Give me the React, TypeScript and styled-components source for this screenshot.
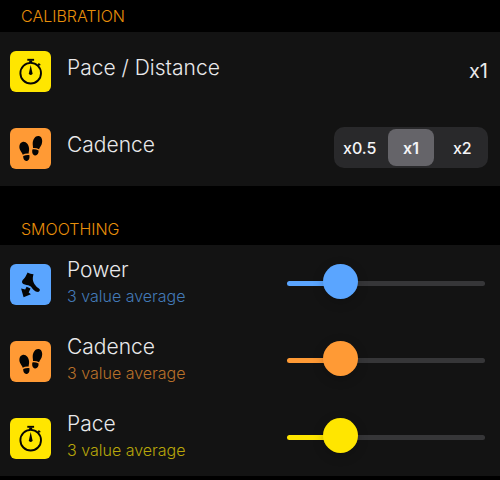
import React, { useState } from "react";
import styled, { createGlobalStyle } from "styled-components";

const GlobalStyle = createGlobalStyle`
  body {
    margin: 0;
    background: #000;
    color: #e9e9eb;
    font-family: Inter, "Liberation Sans", sans-serif;
    font-weight: 300;
  }
  *, *::before, *::after { box-sizing: border-box; }
`;

const Page = styled.main`
  width: 100%;
`;

const SectionTitle = styled.h2<{ $spaced?: boolean }>`
  margin: 0;
  padding: ${(p) => (p.$spaced ? "32px" : "5px")} 21px 5px;
  color: #e88f0a;
  font-size: 16px;
  font-weight: 300;
  line-height: 22px;
`;

const Panel = styled.div`
  background: #131313;
`;

const Row = styled.div`
  display: flex;
  align-items: flex-start;
  gap: 16px;
  height: 77px;
  padding: 0 12px 0 10px;
`;

const IconTile = styled.span<{ $color: string }>`
  display: flex;
  flex: none;
  width: 41px;
  height: 41px;
  margin-top: 19px;
  border-radius: 6px;
  background: ${(p) => p.$color};
  color: #050505;
`;

const Labels = styled.div<{ $single?: boolean }>`
  display: flex;
  flex: 1;
  flex-direction: column;
  padding-top: ${(p) => (p.$single ? "22px" : "11px")};
`;

const Name = styled.span`
  font-size: 21px;
  line-height: 28px;
`;

const Detail = styled.span<{ $color: string }>`
  color: ${(p) => p.$color};
  font-size: 16px;
  line-height: 24px;
`;

const Value = styled.span`
  padding-top: 25px;
  font-size: 20px;
  font-weight: 400;
  line-height: 28px;
`;

const Segments = styled.div`
  display: grid;
  grid-template-columns: repeat(3, 1fr);
  width: 154px;
  height: 41px;
  margin-top: 18px;
  padding: 2px 0;
  border-radius: 10px;
  background: #29292b;
`;

const Segment = styled.button<{ $active: boolean }>`
  margin: 0 3px;
  padding: 0;
  border: 0;
  border-radius: 8px;
  background: ${(p) => (p.$active ? "#656469" : "transparent")};
  color: #f4f4f6;
  font: ${(p) => (p.$active ? 600 : 500)} 16px/24px Inter, "Liberation Sans", sans-serif;
`;

const Slider = styled.input<{ $color: string; $fill: number }>`
  appearance: none;
  flex: none;
  width: 198px;
  height: 36px;
  margin: 20px 3px 0 0;
  background: transparent;

  &::-webkit-slider-runnable-track {
    height: 5px;
    border-radius: 3px;
    background: linear-gradient(
      to right,
      ${(p) => p.$color} ${(p) => p.$fill}%,
      #363638 ${(p) => p.$fill}%
    );
  }

  &::-webkit-slider-thumb {
    appearance: none;
    width: 35px;
    height: 35px;
    margin-top: -17px;
    border-radius: 50%;
    background: ${(p) => p.$color};
    box-shadow: 0 3px 12px rgba(0, 0, 0, 0.2);
  }
`;

const Stopwatch = () => (
  <svg viewBox="0 0 41 41" width="41" height="41" aria-hidden="true">
    <g fill="none" stroke="currentColor">
      <circle cx="20.7" cy="22.2" r="10.3" strokeWidth="1.9" />
      <path d="M17.3 8.8h6.8" strokeWidth="1.9" />
      <path d="M20.7 9.5v2.5" strokeWidth="3" />
      <path d="M27.4 15.1l1.8-1.8M28.4 12.4l1.8 1.8" strokeWidth="1.4" />
    </g>
    <path d="M20.7 14l1.8 8.3a1.8 1.8 0 1 1-3.6 0z" fill="currentColor" />
  </svg>
);

const Footprints = () => (
  <svg viewBox="0 0 41 41" width="41" height="41" aria-hidden="true" fill="currentColor">
    <path d="M12.5 14c3.3-.9 6.4 2.7 6.6 6.7.1 2.1-.5 3.4-.4 4.9-2.2-.4-4.1.1-6 1.1-.4-1.6-1.7-2.6-2.6-4.6-1.5-3.4-.6-7.4 2.4-8.1z" />
    <path d="M13.2 28.1c2.1-1 4-1.4 6.1-1.1.7 3-.4 5.7-2.5 5.9-2.3.3-3.8-1.9-3.6-4.8z" />
    <path d="M29 8.1c-3.4-.8-6.1 2.9-6.3 6.9-.1 2.1.4 3.5.3 5 2.2-.3 4.1.2 6.1 1.3.4-1.7 1.7-2.9 2.5-4.8 1.4-3.5.4-7.7-2.6-8.4z" />
    <path d="M28.6 22.6c-2.1-1.1-4-1.5-6.2-1.2-.7 3 .4 5.7 2.6 6 2.2.3 3.8-1.9 3.6-4.8z" />
  </svg>
);

const FootPower = () => (
  <svg viewBox="0 0 41 41" width="41" height="41" aria-hidden="true" fill="currentColor">
    <path d="M17.6 8.6c1.9 1 3.8 1.6 5.9 1.7-.7 2.5-.9 4.7-.4 6.7.6 2.2 1.8 3.8 3 5.2 1.2 1.3 3.3 2.1 3.7 3.4.3 1.2-.4 2.3-1.7 2.3-1.5 0-3.2-.5-4.4-1.8-1.3-1.4-2-3.3-3.8-4.2-2.1-1-4.7-.9-6.6-1.9-1.3-.8-1.6-2.1-1-3.3.7-1.3 2.1-2.2 3-3.7.9-1.4 1.5-2.9 2.3-4.4z" />
    <path d="M16.6 22.8l3.9 1.8-1.8 3.8 2.2 1.8-7.3 3-2.5-8.6 4.1 1z" />
  </svg>
);

const BLUE = "#5aa5ff";
const ORANGE = "#ff9a35";
const YELLOW = "#ffe600";

const smoothing = [
  { name: "Power", color: BLUE, muted: "#437ab8", Icon: FootPower },
  { name: "Cadence", color: ORANGE, muted: "#b8702a", Icon: Footprints },
  { name: "Pace", color: YELLOW, muted: "#b8a60a", Icon: Stopwatch },
];

const SmoothingRow = ({ name, color, muted, Icon }: (typeof smoothing)[number]) => {
  const [value, setValue] = useState(3);
  const id = `smoothing-${name.toLowerCase()}`;
  return (
    <Row>
      <IconTile $color={color}>
        <Icon />
      </IconTile>
      <Labels>
        <Name as="label" htmlFor={id}>{name}</Name>
        <Detail $color={muted}>{value} value average</Detail>
      </Labels>
      <Slider
        id={id}
        type="range"
        min={1}
        max={10}
        value={value}
        onChange={(e) => setValue(Number(e.target.value))}
        $color={color}
        $fill={9 + ((value - 1) / 9) * 82}
      />
    </Row>
  );
};

export default function App() {
  const [factor, setFactor] = useState("x1");
  return (
    <Page>
      <GlobalStyle />
      <section>
        <SectionTitle>CALIBRATION</SectionTitle>
        <Panel>
          <Row>
            <IconTile $color={YELLOW}>
              <Stopwatch />
            </IconTile>
            <Labels $single>
              <Name>Pace / Distance</Name>
            </Labels>
            <Value>x1</Value>
          </Row>
          <Row>
            <IconTile $color={ORANGE}>
              <Footprints />
            </IconTile>
            <Labels $single>
              <Name id="cadence-factor">Cadence</Name>
            </Labels>
            <Segments role="group" aria-labelledby="cadence-factor">
              {["x0.5", "x1", "x2"].map((option) => (
                <Segment
                  key={option}
                  type="button"
                  $active={option === factor}
                  aria-pressed={option === factor}
                  onClick={() => setFactor(option)}
                >
                  {option}
                </Segment>
              ))}
            </Segments>
          </Row>
        </Panel>
      </section>
      <section>
        <SectionTitle $spaced>SMOOTHING</SectionTitle>
        <Panel>
          {smoothing.map((item) => (
            <SmoothingRow key={item.name} {...item} />
          ))}
        </Panel>
      </section>
    </Page>
  );
}
